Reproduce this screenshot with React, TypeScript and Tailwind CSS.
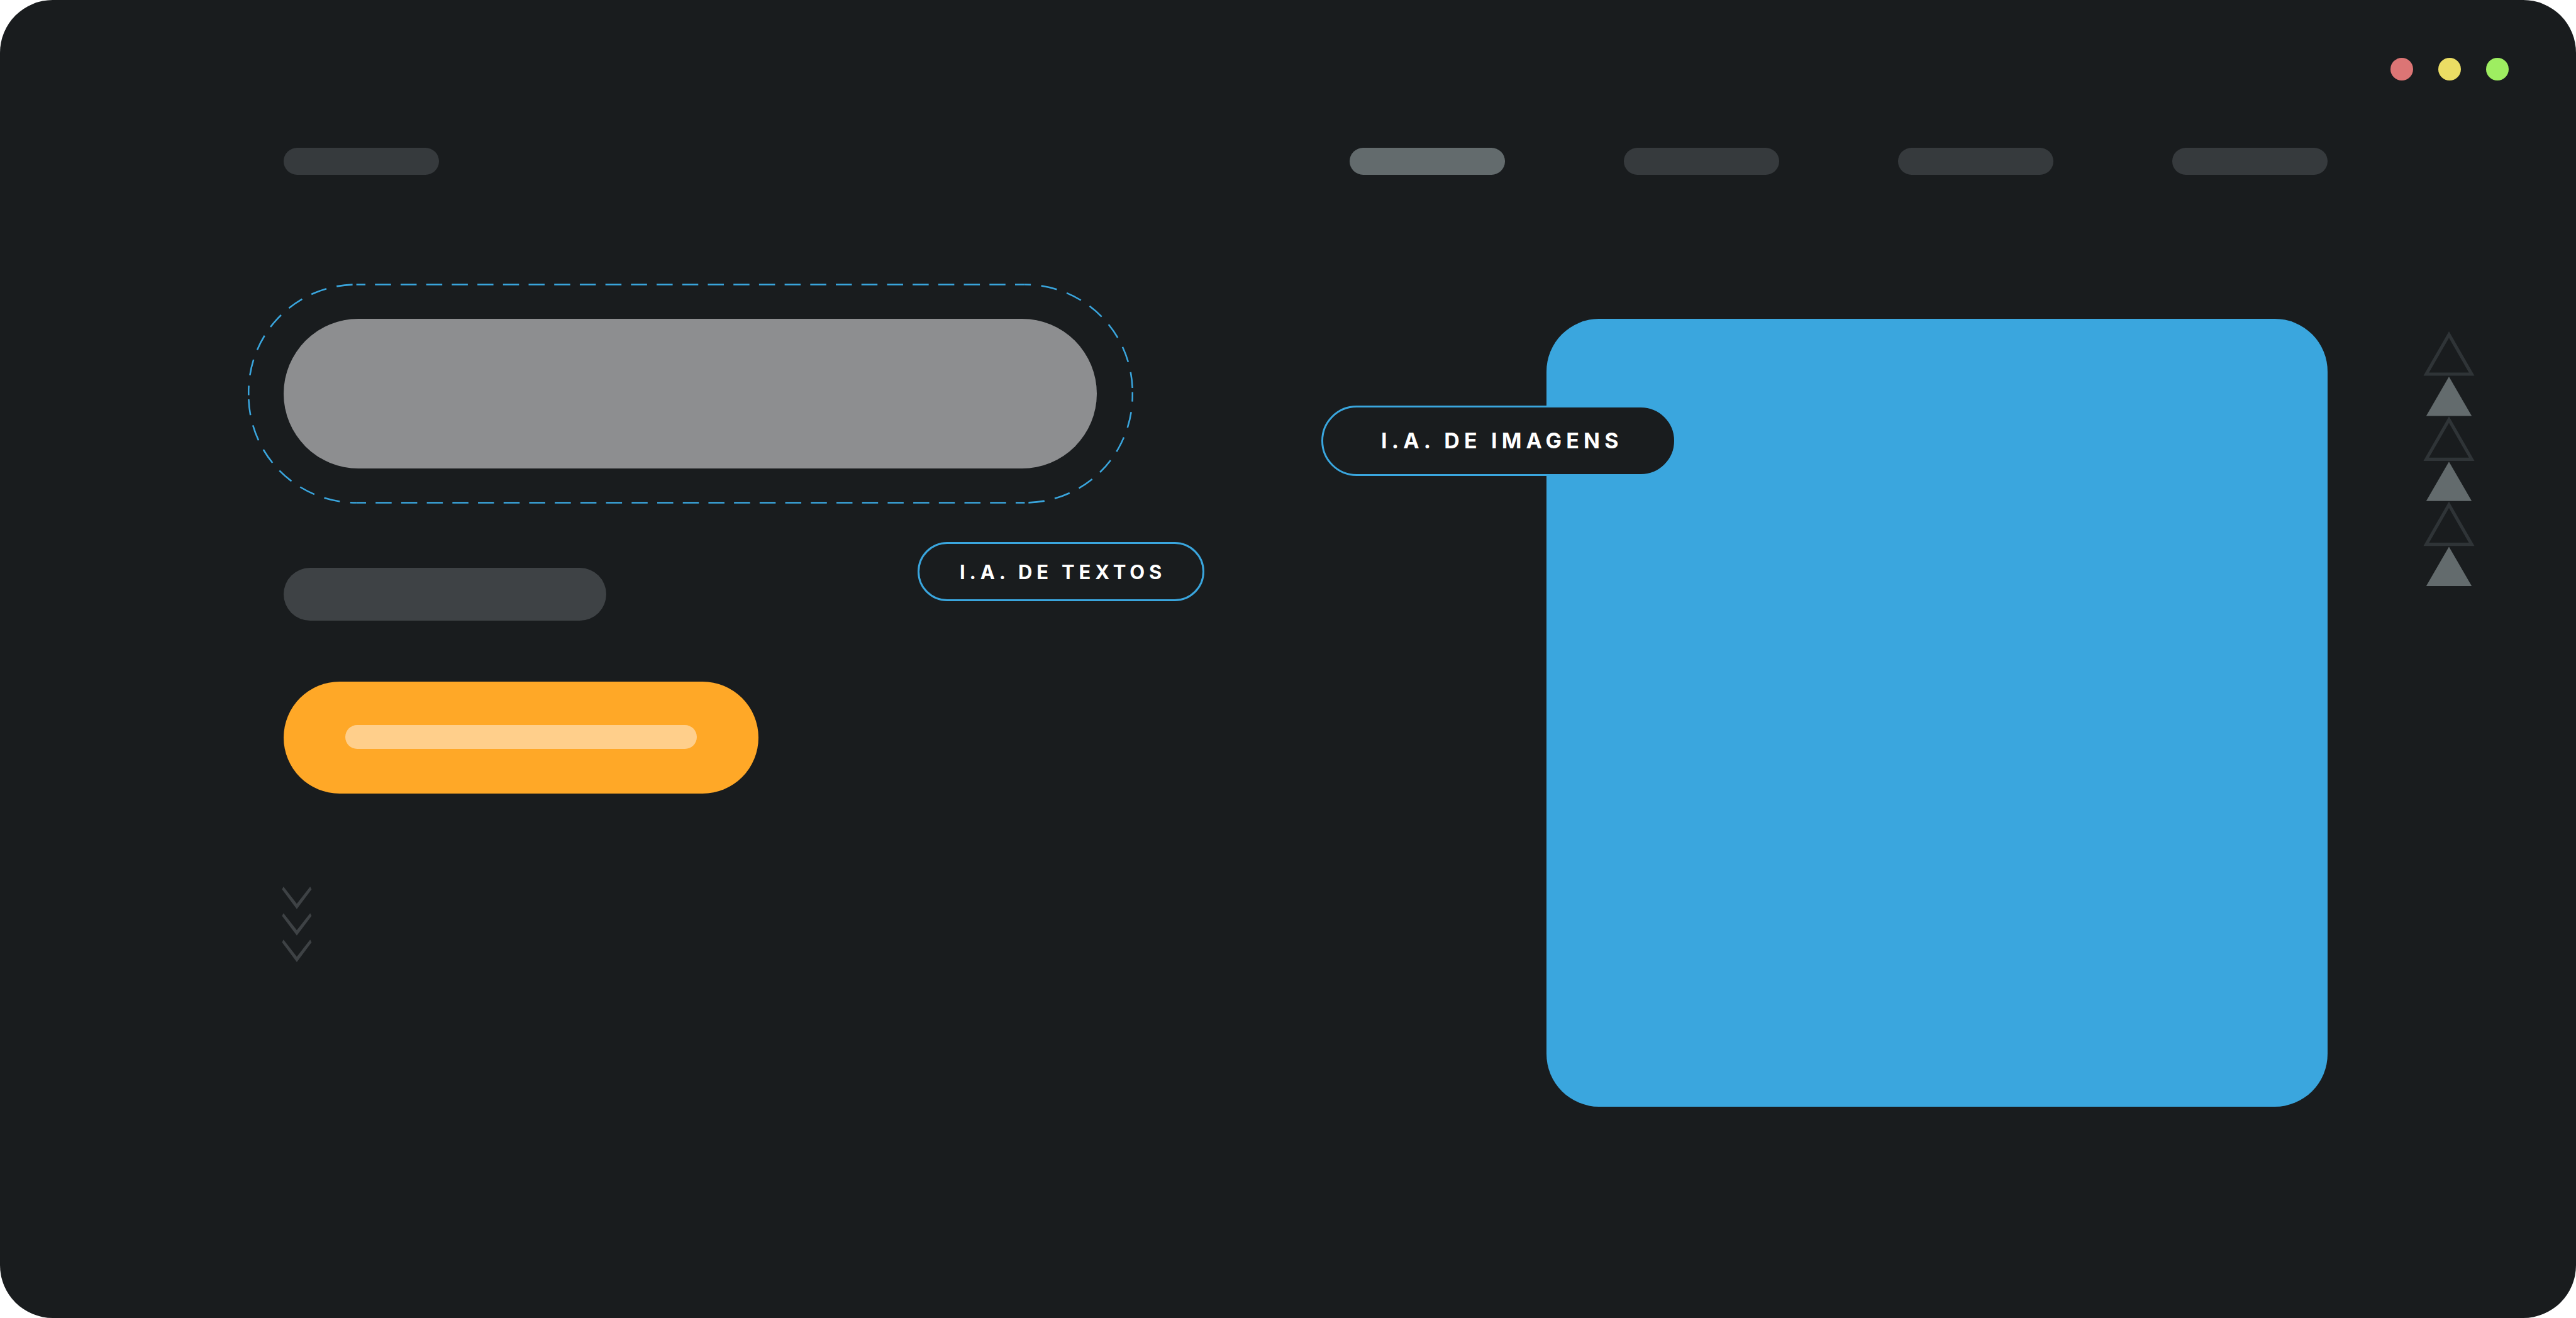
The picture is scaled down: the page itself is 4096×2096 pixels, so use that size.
const navItems = [
  { id: "inicio", active: true },
  { id: "servicos", active: false },
  { id: "projetos", active: false },
  { id: "contato", active: false },
];

/* Dashed capsule drawn around the headline; the second half is the first one turned by 180 degrees. */
function DashedOutline() {
  return (
    <svg
      viewBox="0 0 1656 411"
      className="absolute top-1/2 left-1/2 h-[350px] w-[1408px] -translate-x-1/2 -translate-y-1/2"
      fill="none"
      stroke="#3aa6de"
      strokeWidth="3"
      aria-hidden="true"
    >
      <defs>
        <g id="half-outline">
          <path d="M203 1.5H1453.5" strokeDasharray="30 17.88" strokeDashoffset="13" />
          <path d="M1453.5 1.5A201 201 0 0 1 1654.5 202.5" strokeDasharray="30 19.5" strokeDashoffset="19" />
          <path d="M1654.5 202.5V208.5A201 201 0 0 1 1453.5 409.5" strokeDasharray="30 19.5" strokeDashoffset="12" />
        </g>
      </defs>
      <use href="#half-outline" />
      <use href="#half-outline" transform="rotate(180 828 205.5)" />
    </svg>
  );
}

function Chevrons() {
  return (
    <svg viewBox="93 57 166 424" className="mt-37 h-[120px] w-[47px] overflow-visible" fill="#3e4245" aria-hidden="true">
      {[0, 149, 298].map((y) => (
        <path key={y} transform={`translate(0 ${y})`} d="M92 57L167 153L242 57L250 72L167 183L84 72Z" />
      ))}
    </svg>
  );
}

function Triangles() {
  return (
    <svg viewBox="53 31 96 476" className="mt-5 h-[405px] w-[82px] shrink-0" aria-hidden="true">
      {[0, 159, 318].map((y) => (
        <g key={y} transform={`translate(0 ${y})`}>
          <path d="M101 37L143.5 111H58.5Z" fill="none" stroke="#2f3437" strokeWidth="6" strokeMiterlimit="10" />
          <path d="M101 115.5L143.5 189H58.5Z" fill="#636b6d" />
        </g>
      ))}
    </svg>
  );
}

export default function App() {
  return (
    <div className="flex min-h-screen w-full flex-col rounded-[84px] bg-[#191c1e] font-['Inter','Liberation_Sans',sans-serif]">
      <div className="flex justify-end gap-10 pt-[92px] pr-[107px]">
        <span className="size-9 rounded-full bg-[#dc7575]" />
        <span className="size-9 rounded-full bg-[#ebdd64]" />
        <span className="size-9 rounded-full bg-[#9eee61]" />
      </div>

      <header className="mt-[107px] flex items-center justify-between pr-[395px] pl-[451px]">
        <a href="#home" aria-label="Home" className="h-[43px] w-[247px] rounded-full bg-[#363a3d]" />
        <nav className="flex gap-[189px]">
          {navItems.map((item) => (
            <a
              key={item.id}
              href={`#${item.id}`}
              aria-label={item.id}
              className={
                item.active
                  ? "h-[43px] w-[247px] rounded-full bg-[#636b6d]"
                  : "h-[43px] w-[247px] rounded-full bg-[#363a3d]"
              }
            />
          ))}
        </nav>
      </header>

      <main className="mt-[229px] flex items-start pr-[161px] pl-[451px]">
        <section className="flex flex-1 flex-col items-start">
          <div className="relative h-[238px] w-[1293px] rounded-full bg-[#8d8e90]">
            <DashedOutline />
            <div className="absolute top-[355px] -right-[171px] flex h-[94px] w-[456px] items-center rounded-full border-[3px] border-[#3aa6de] pl-16">
              <span className="text-[31px] leading-none font-bold tracking-[0.22em] whitespace-nowrap text-white">
                I.A. DE TEXTOS
              </span>
            </div>
          </div>
          <div className="mt-[158px] h-[84px] w-[513px] rounded-full bg-[#3e4245]" />
          <button
            type="button"
            aria-label="Action"
            className="mt-[97px] flex h-[178px] w-[755px] items-center justify-center rounded-full bg-[#ffa827] pb-[2px]"
          >
            <span className="h-[38px] w-[559px] rounded-full bg-[#ffcf8b]" />
          </button>
          <Chevrons />
        </section>

        <section className="relative mr-[152px] h-[1253px] w-[1242px] shrink-0 rounded-[84px] bg-[#3aa6de]">
          <div className="absolute top-[138px] -left-[358px] flex h-[112px] w-[564px] items-center rounded-full border-[3px] border-[#3aa6de] bg-[#191c1e] pl-[92px]">
            <span className="text-[34px] leading-none font-bold tracking-[0.21em] whitespace-nowrap text-white">
              I.A. DE IMAGENS
            </span>
          </div>
        </section>

        <Triangles />
      </main>
    </div>
  );
}
